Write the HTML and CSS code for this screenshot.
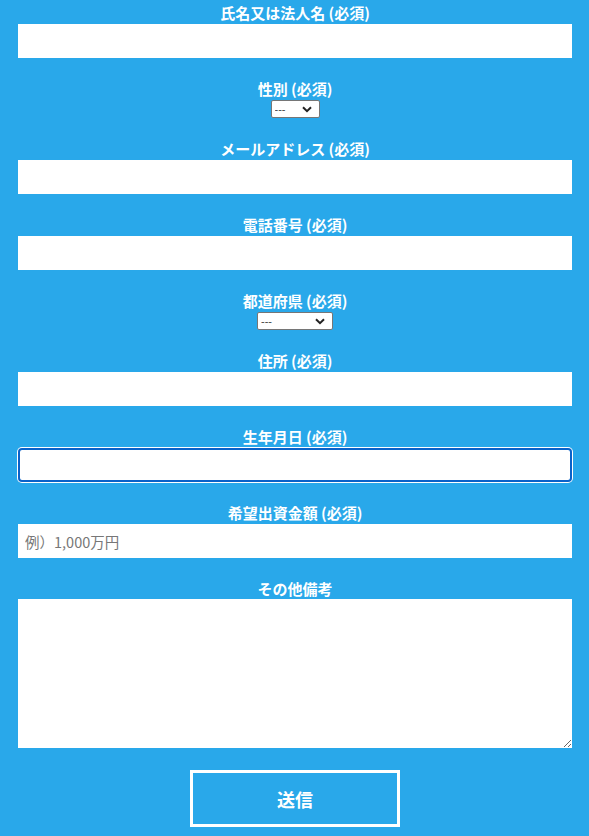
FILE: index.html
```html
<!DOCTYPE html>
<html lang="ja">
<head>
<meta charset="utf-8">
<title>お問い合わせ</title>
<link rel="stylesheet" href="styles.css">
</head>
<body>
<form class="form">
  <div class="field">
    <label class="label">氏名又は法人名 (必須)</label>
    <input class="input" type="text">
  </div>
  <div class="field">
    <label class="label">性別 (必須)</label>
    <span class="select-wrap">
      <select class="select select-sm"><option>---</option></select>
      <svg class="chev" width="10" height="7" viewBox="0 0 10 7"><path d="M1 1.2 L5 5.2 L9 1.2" fill="none" stroke="#222" stroke-width="2"/></svg>
    </span>
  </div>
  <div class="field">
    <label class="label">メールアドレス (必須)</label>
    <input class="input" type="text">
  </div>
  <div class="field">
    <label class="label">電話番号 (必須)</label>
    <input class="input" type="text">
  </div>
  <div class="field">
    <label class="label">都道府県 (必須)</label>
    <span class="select-wrap">
      <select class="select select-md"><option>---</option></select>
      <svg class="chev" width="10" height="7" viewBox="0 0 10 7"><path d="M1 1.2 L5 5.2 L9 1.2" fill="none" stroke="#222" stroke-width="2"/></svg>
    </span>
  </div>
  <div class="field">
    <label class="label">住所 (必須)</label>
    <input class="input" type="text">
  </div>
  <div class="field">
    <label class="label">生年月日 (必須)</label>
    <input class="input input-focus" type="text">
  </div>
  <div class="field">
    <label class="label">希望出資金額 (必須)</label>
    <input class="input" type="text" placeholder="例）1,000万円">
  </div>
  <div class="field">
    <label class="label">その他備考</label>
    <textarea class="textarea"></textarea>
  </div>
  <div class="actions">
    <button class="submit" type="button">送信</button>
  </div>
</form>
</body>
</html>
```
FILE: styles.css
```css
html, body {
  margin: 0;
  padding: 0;
  background: #29a8ea;
}
body {
  font-family: "Noto Sans CJK JP", "Noto Sans", sans-serif;
  color: #fff;
}
.form {
  display: flex;
  flex-direction: column;
  padding: 2px 17px 0 18px;
}
.field {
  display: flex;
  flex-direction: column;
  align-items: center;
  margin-bottom: 20px;
}
.label {
  display: block;
  font-size: 15px;
  line-height: 22px;
  font-weight: 700;
}
.input {
  box-sizing: border-box;
  width: 100%;
  height: 34px;
  border: none;
  margin: 0;
  padding: 0 7px;
  background: #fff;
  font-family: "Noto Sans CJK JP", "Noto Sans", sans-serif;
  font-size: 14.5px;
  color: #333;
  outline: none;
}
.input::placeholder {
  color: #777;
}
.input-focus {
  border-radius: 4px;
  box-shadow: inset 0 0 0 2px #0a62c9, 0 0 0 1px #fff;
}
.select-wrap {
  position: relative;
  display: inline-block;
  height: 18px;
}
.select {
  appearance: none;
  -webkit-appearance: none;
  box-sizing: border-box;
  height: 18px;
  margin: 0;
  padding: 0 0 0 3px;
  border: 1px solid #767676;
  border-radius: 2px;
  background: #fff;
  font-family: "Liberation Sans", sans-serif;
  font-size: 11px;
  line-height: 16px;
  color: #444;
  display: block;
}
.select-sm { width: 49px; }
.select-md { width: 76px; }
.chev {
  position: absolute;
  right: 8px;
  top: 6px;
  pointer-events: none;
}
.textarea {
  box-sizing: border-box;
  width: 100%;
  height: 149px;
  border: none;
  margin: -1px 0 0;
  padding: 4px 7px;
  background: #fff;
  display: block;
  font-family: "Noto Sans CJK JP", sans-serif;
  font-size: 14px;
  outline: none;
}
.actions {
  display: flex;
  justify-content: center;
  margin-top: 2px;
}
.submit {
  box-sizing: border-box;
  width: 210px;
  height: 57px;
  border: 3px solid #fff;
  background: transparent;
  color: #fff;
  font-family: "Noto Sans CJK JP", sans-serif;
  font-size: 18px;
  font-weight: 700;
  cursor: pointer;
}
```
